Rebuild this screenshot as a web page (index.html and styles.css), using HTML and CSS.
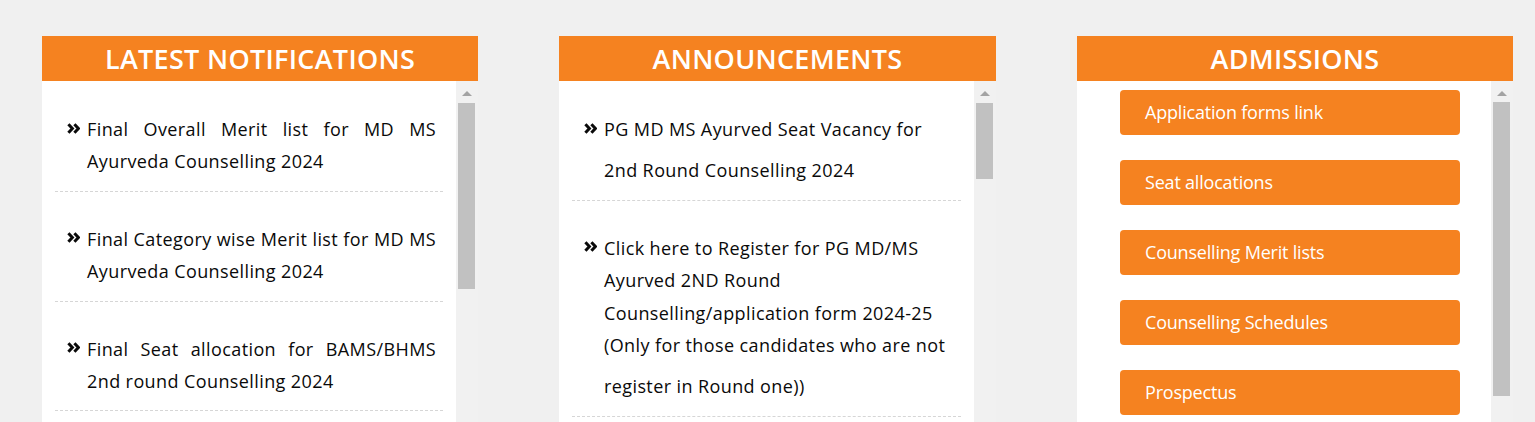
FILE: index.html
```html
<!DOCTYPE html>
<html lang="en">
<head>
<meta charset="utf-8">
<title>Notifications</title>
<link rel="stylesheet" href="styles.css">
</head>
<body>
<div class="boards">
  <section class="panel">
    <h2 class="panel-title">LATEST NOTIFICATIONS</h2>
    <div class="panel-body">
      <ul class="news justify">
        <li><span class="ico"><svg width="13" height="11" viewBox="0 0 13 11"><polyline points="1.4,1.2 5.4,5.5 1.4,9.8"/><polyline points="7.4,1.2 11.4,5.5 7.4,9.8"/></svg></span><a href="#">Final Overall Merit list for MD MS Ayurveda Counselling 2024</a></li>
        <li><span class="ico"><svg width="13" height="11" viewBox="0 0 13 11"><polyline points="1.4,1.2 5.4,5.5 1.4,9.8"/><polyline points="7.4,1.2 11.4,5.5 7.4,9.8"/></svg></span><a href="#">Final Category wise Merit list for MD MS Ayurveda Counselling 2024</a></li>
        <li><span class="ico"><svg width="13" height="11" viewBox="0 0 13 11"><polyline points="1.4,1.2 5.4,5.5 1.4,9.8"/><polyline points="7.4,1.2 11.4,5.5 7.4,9.8"/></svg></span><a href="#">Final Seat allocation for BAMS/BHMS 2nd round Counselling 2024</a></li>
      </ul>
      <div class="scrollbar"><span class="arrow"></span><span class="thumb thumb-a"></span></div>
    </div>
  </section>

  <section class="panel">
    <h2 class="panel-title">ANNOUNCEMENTS</h2>
    <div class="panel-body">
      <ul class="news">
        <li><span class="ico"><svg width="13" height="11" viewBox="0 0 13 11"><polyline points="1.4,1.2 5.4,5.5 1.4,9.8"/><polyline points="7.4,1.2 11.4,5.5 7.4,9.8"/></svg></span><a href="#">PG MD MS Ayurved Seat Vacancy for 2nd Round Counselling 2024<span class="new"></span></a></li>
        <li><span class="ico"><svg width="13" height="11" viewBox="0 0 13 11"><polyline points="1.4,1.2 5.4,5.5 1.4,9.8"/><polyline points="7.4,1.2 11.4,5.5 7.4,9.8"/></svg></span><a href="#">Click here to Register for PG MD/MS Ayurved 2ND Round Counselling/application form 2024-25 (Only for those candidates who are not register in Round one))<span class="new"></span></a></li>
      </ul>
      <div class="scrollbar"><span class="arrow"></span><span class="thumb thumb-b"></span></div>
    </div>
  </section>

  <section class="panel">
    <h2 class="panel-title">ADMISSIONS</h2>
    <div class="panel-body">
      <ul class="links">
        <li><a href="#">Application forms link</a></li>
        <li><a href="#">Seat allocations</a></li>
        <li><a href="#">Counselling Merit lists</a></li>
        <li><a href="#">Counselling Schedules</a></li>
        <li><a href="#">Prospectus</a></li>
      </ul>
      <div class="scrollbar"><span class="arrow"></span><span class="thumb thumb-c"></span></div>
    </div>
  </section>
</div>
</body>
</html>
```

FILE: styles.css
```css
html, body {
  margin: 0;
  padding: 0;
  height: 422px;
  overflow: hidden;
}
body {
  background: #f0f0f0;
  font-family: "Open Sans", "Liberation Sans", sans-serif;
  color: #0a0a0a;
}
.boards {
  display: grid;
  grid-template-columns: 436px 437px 436px;
  column-gap: 81px;
  padding: 36px 22px 0 42px;
}
.panel {
  display: flex;
  flex-direction: column;
}
.panel-title {
  margin: 0;
  height: 45px;
  background: #f58220;
  color: #fff;
  font-size: 27px;
  font-weight: 600;
  letter-spacing: 0.3px;
  line-height: 45px;
  text-align: center;
}
.panel-body {
  display: flex;
  height: 341px;
}
.news, .links {
  flex: 1;
  margin: 0;
  list-style: none;
  background: #fff;
  overflow: hidden;
}
.news {
  padding: 1px 13px 0;
}
.news li {
  display: flex;
  align-items: flex-start;
  padding: 31px 7px 13px 12px;
  border-bottom: 1px dashed #d6d6d6;
  font-size: 18px;
  letter-spacing: 0.4px;
  line-height: 32.4px;
}
.news .ico {
  flex: none;
  width: 13px;
  margin-right: 7px;
  padding-top: 9.5px;
  line-height: 0;
}
.news .ico svg {
  fill: none;
  stroke: #0a0a0a;
  stroke-width: 3;
  stroke-linecap: butt;
  stroke-linejoin: miter;
}
.news a {
  color: #0a0a0a;
  text-decoration: none;
}
.justify a {
  text-align: justify;
}
.news .new {
  display: inline-block;
  width: 0;
  height: 32px;
}
.links {
  padding: 9px 31px 0 43px;
  display: flex;
  flex-direction: column;
  gap: 25px;
}
.links li {
  flex: none;
}
.links a {
  display: block;
  height: 45px;
  padding-left: 25px;
  background: #f58220;
  border-radius: 4px;
  color: #fff;
  font-size: 18px;
  letter-spacing: -0.2px;
  line-height: 45px;
  text-decoration: none;
}
.scrollbar {
  flex: none;
  width: 22px;
  background: #f1f1f1;
  display: flex;
  flex-direction: column;
  align-items: flex-start;
}
.arrow {
  margin: 10px 0 0 6px;
  width: 0;
  height: 0;
  border-left: 5px solid transparent;
  border-right: 5px solid transparent;
  border-bottom: 5px solid #a3a3a3;
}
.thumb {
  margin: 7px 0 0 2px;
  width: 17px;
  background: #c1c1c1;
}
.thumb-a { height: 186px; }
.thumb-b { height: 76px; }
.thumb-c { height: 294px; margin-top: 6px; }
```
